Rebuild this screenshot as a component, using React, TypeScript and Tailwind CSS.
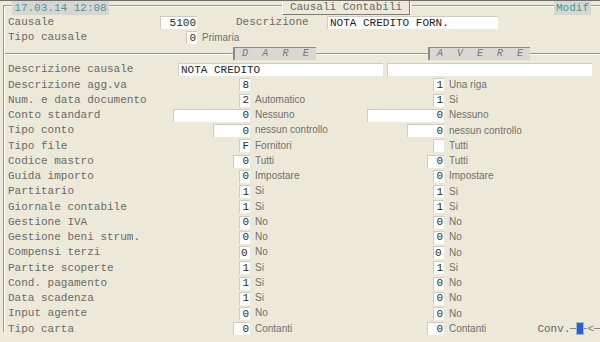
const mono = "font-['Liberation_Mono','Courier_New',monospace]"
const sans = "font-['Liberation_Sans',Arial,sans-serif]"

type Row = {
  label: string
  lv: string
  lw: string
  ld: string
  rv: string
  rw: string
  rd: string
  left?: boolean
}

const rows: Row[] = [
  { label: 'Descrizione agg.va', lv: '8', lw: 'w-[11px]', ld: '', rv: '1', rw: 'w-[11px]', rd: 'Una riga' },
  { label: 'Num. e data documento', lv: '2', lw: 'w-[11px]', ld: 'Automatico', rv: '1', rw: 'w-[11px]', rd: 'Si' },
  { label: 'Conto standard', lv: '0', lw: 'w-[77px]', ld: 'Nessuno', rv: '0', rw: 'w-[77px]', rd: 'Nessuno' },
  { label: 'Tipo conto', lv: '0', lw: 'w-[37px]', ld: 'nessun controllo', rv: '0', rw: 'w-[37px]', rd: 'nessun controllo' },
  { label: 'Tipo file', lv: 'F', lw: 'w-[11px]', ld: 'Fornitori', rv: '', rw: 'w-[11px]', rd: 'Tutti' },
  { label: 'Codice mastro', lv: '0', lw: 'w-[17px]', ld: 'Tutti', rv: '0', rw: 'w-[17px]', rd: 'Tutti' },
  { label: 'Guida importo', lv: '0', lw: 'w-[11px]', ld: 'Impostare', rv: '0', rw: 'w-[11px]', rd: 'Impostare' },
  { label: 'Partitario', lv: '1', lw: 'w-[11px]', ld: 'Si', rv: '1', rw: 'w-[11px]', rd: 'Si' },
  { label: 'Giornale contabile', lv: '1', lw: 'w-[11px]', ld: 'Si', rv: '1', rw: 'w-[11px]', rd: 'Si' },
  { label: 'Gestione IVA', lv: '0', lw: 'w-[11px]', ld: 'No', rv: '0', rw: 'w-[11px]', rd: 'No' },
  { label: 'Gestione beni strum.', lv: '0', lw: 'w-[11px]', ld: 'No', rv: '0', rw: 'w-[11px]', rd: 'No' },
  { label: 'Compensi terzi', lv: '0', lw: 'w-[11px]', ld: 'No', rv: '0', rw: 'w-[11px]', rd: 'No', left: true },
  { label: 'Partite scoperte', lv: '1', lw: 'w-[11px]', ld: 'Si', rv: '1', rw: 'w-[11px]', rd: 'Si' },
  { label: 'Cond. pagamento', lv: '1', lw: 'w-[11px]', ld: 'Si', rv: '0', rw: 'w-[11px]', rd: 'No' },
  { label: 'Data scadenza', lv: '1', lw: 'w-[11px]', ld: 'Si', rv: '0', rw: 'w-[11px]', rd: 'No' },
  { label: 'Input agente', lv: '0', lw: 'w-[11px]', ld: 'No', rv: '0', rw: 'w-[11px]', rd: 'No' },
  { label: 'Tipo carta', lv: '0', lw: 'w-[17px]', ld: 'Contanti', rv: '0', rw: 'w-[17px]', rd: 'Contanti' },
]

function Groove({ className = '' }: { className?: string }) {
  return (
    <div className={`h-[14px] shrink-0 ${className}`}>
      <div className="mt-[4px] border-t border-b border-t-[#979797] border-b-white" />
    </div>
  )
}

function Box({ value, w, left }: { value: string; w: string; left?: boolean }) {
  return (
    <span
      className={`flex h-[13px] shrink-0 items-center border-t border-l border-[#cfccbd] bg-white pr-[1px] text-[11px] leading-none text-[#2a2a2a] ${mono} ${w} ${
        left ? 'justify-start pl-[1px]' : 'justify-end'
      }`}
    >
      {value}
    </span>
  )
}

function Desc({ children }: { children: React.ReactNode }) {
  return <span className={`pl-[5px] text-[10px] leading-none text-[#707070] ${sans}`}>{children}</span>
}

function Conv() {
  return (
    <div className="ml-auto flex items-center">
      <span className={`text-[11px] text-[#666] ${mono}`}>Conv.</span>
      <span className="w-[6px] border-t border-[#8a8a8a]" />
      <span className="h-[13px] w-[8px] border border-[#9db4e6] bg-[#2a5fd0]" />
      <span className="w-[3px] border-t border-[#8a8a8a]" />
      <span className={`text-[11px] text-[#777] ${mono}`}>&lt;</span>
      <span className="w-[6px] border-t border-[#8a8a8a]" />
    </div>
  )
}

function Letters({ text, cols }: { text: string; cols: string }) {
  return (
    <div
      className={`grid h-[13px] ${cols} items-center border-t border-l-2 border-[#8a8a8a] bg-[#d9d8d3] text-center text-[10px] italic leading-none text-[#777] ${mono}`}
    >
      {text.split('').map((c, i) => (
        <span key={i}>{c}</span>
      ))}
    </div>
  )
}

export default function App() {
  return (
    <div className={`h-[342px] w-[600px] overflow-hidden border-t border-[#6e6e6e] bg-[#ece9d8] ${mono}`}>
      <header className="flex h-[14px]">
        <div className="w-[3px] shrink-0" />
        <div className="mt-[4px] h-[10px] w-[9px] shrink-0 border-t border-l border-[#979797] shadow-[inset_1px_1px_0_#fff]" />
        <div className="flex w-[97px] shrink-0 items-center justify-center bg-[#d6d6d2] text-[11px] text-[#3a9a9a]">
          17.03.14 12:08
        </div>
        <Groove className="w-[173px]" />
        <div className="flex w-[128px] shrink-0 items-center justify-center border-r border-b border-l border-r-[#7a7a7a] border-b-[#7a7a7a] border-l-white text-[11px] text-[#666]">
          Causali Contabili
        </div>
        <div className="w-[2px] shrink-0 border-l border-white" />
        <Groove className="w-[142px]" />
        <div className="flex w-[37px] shrink-0 items-center justify-center bg-[#d6d6d2] text-[11px] text-[#3a9a9a]">
          Modif
        </div>
        <Groove className="w-[9px]" />
      </header>

      <main className="ml-[3px] h-[317px] border-l border-[#979797]">
        <div className="h-full border-l border-white text-[11px] text-[#6a6a6a]">
          <div className="flex h-[15px] items-center pl-[3px]">
            <div className="flex w-[189px] items-center justify-between">
              <span>Causale</span>
              <Box value="5100" w="w-[37px]" />
            </div>
            <span className="ml-[39px] w-[91px]">Descrizione</span>
            <span className="flex h-[13px] w-[171px] items-center border-t border-l border-[#cfccbd] bg-white pl-[2px] text-[#1e1e1e]">
              NOTA CREDITO FORN.
            </span>
          </div>
          <div className="flex h-[15px] items-center pl-[3px]">
            <div className="flex w-[189px] items-center justify-between">
              <span>Tipo causale</span>
              <Box value="0" w="w-[11px]" />
            </div>
            <Desc>Primaria</Desc>
          </div>

          <div className="flex h-[17px] items-center">
            <div className="w-[228px] shrink-0 border-t border-b border-t-[#979797] border-b-white" />
            <div className="w-[83px] shrink-0">
              <Letters text="DARE" cols="grid-cols-4" />
            </div>
            <div className="w-[112px] shrink-0 border-t border-b border-t-[#979797] border-b-white" />
            <div className="w-[102px] shrink-0">
              <Letters text="AVERE" cols="grid-cols-5" />
            </div>
            <div className="flex-1 border-t border-b border-t-[#979797] border-b-white" />
          </div>

          <div className="flex h-[15.25px] items-center pl-[3px]">
            <span className="w-[170px] shrink-0">Descrizione causale</span>
            <span className="flex h-[13px] w-[205px] shrink-0 items-center border-t border-l border-[#cfccbd] bg-white pl-[2px] text-[#1e1e1e]">
              NOTA CREDITO
            </span>
            <span className="ml-[4px] h-[13px] w-[205px] shrink-0 border-t border-l border-[#cfccbd] bg-white" />
          </div>

          {rows.map((r) => (
            <div key={r.label} className="flex h-[15.25px] items-center pl-[3px]">
              <div className="flex w-[242px] shrink-0 items-center justify-between">
                <span>{r.label}</span>
                <Box value={r.lv} w={r.lw} left={r.left} />
              </div>
              <div className="w-[117px] shrink-0">{r.ld && <Desc>{r.ld}</Desc>}</div>
              <div className="flex w-[77px] shrink-0 justify-end">
                <Box value={r.rv} w={r.rw} left={r.left} />
              </div>
              <div className="flex flex-1 items-center">
                <Desc>{r.rd}</Desc>
                {r.label === 'Tipo carta' && <Conv />}
              </div>
            </div>
          ))}
        </div>
      </main>
    </div>
  )
}
